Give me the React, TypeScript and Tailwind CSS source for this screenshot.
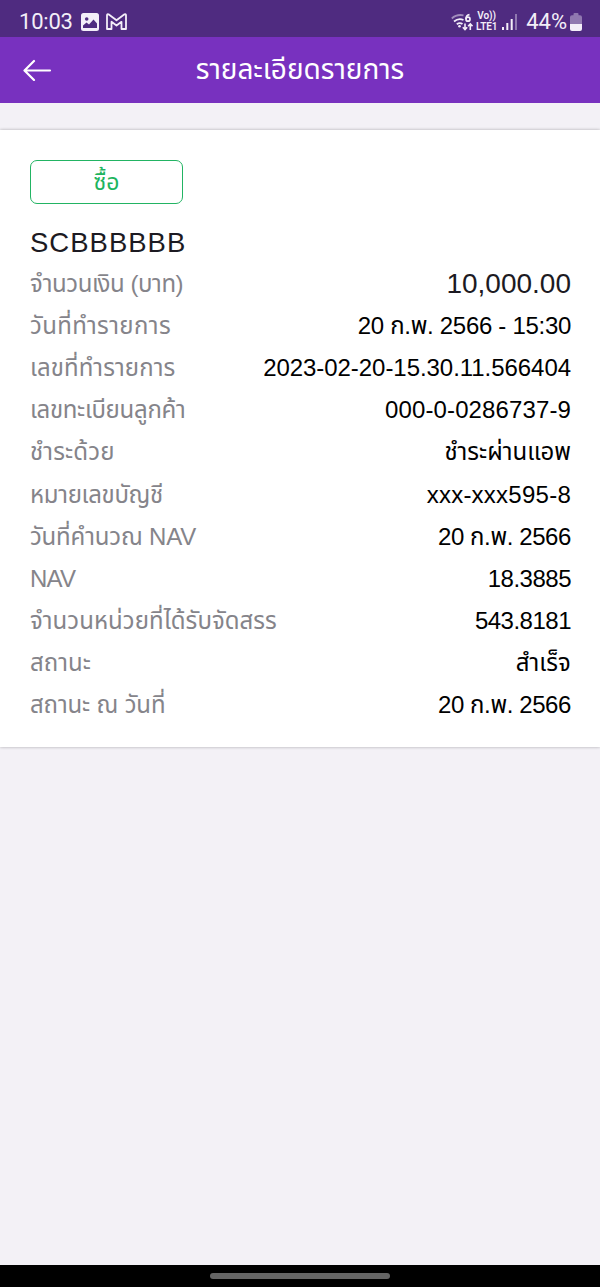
import clsx from 'clsx'

type Row = {
  label: string
  value: string
  labelClass?: string
  valueClass?: string
}

const ROWS: Row[] = [
  { label: 'จำนวนเงิน (บาท)', value: '10,000.00', labelClass: 'tracking-[-0.45px]', valueClass: 'text-[28px] text-[#1c1a22]' },
  { label: 'วันที่ทำรายการ', value: '20 ก.พ. 2566 - 15:30', labelClass: 'tracking-[0.4px]', valueClass: 'tracking-[-0.3px]' },
  { label: 'เลขที่ทำรายการ', value: '2023-02-20-15.30.11.566404', labelClass: 'tracking-[0.1px]', valueClass: 'tracking-[-0.05px]' },
  { label: 'เลขทะเบียนลูกค้า', value: '000-0-0286737-9', labelClass: 'tracking-[-0.3px]', valueClass: 'tracking-[0.12px]' },
  { label: 'ชำระด้วย', value: 'ชำระผ่านแอพ', labelClass: 'tracking-[0.2px]' },
  { label: 'หมายเลขบัญชี', value: 'xxx-xxx595-8', labelClass: 'tracking-[-0.3px]', valueClass: 'tracking-[0.25px]' },
  { label: 'วันที่คำนวณ NAV', value: '20 ก.พ. 2566', labelClass: 'tracking-[-0.2px]', valueClass: 'tracking-[-0.4px]' },
  { label: 'NAV', value: '18.3885', labelClass: 'tracking-[-0.8px]', valueClass: 'tracking-[-0.5px]' },
  { label: 'จำนวนหน่วยที่ได้รับจัดสรร', value: '543.8181', labelClass: 'tracking-[0.05px]', valueClass: 'tracking-[-0.5px]' },
  { label: 'สถานะ', value: 'สำเร็จ', valueClass: 'tracking-[0.1px]' },
  { label: 'สถานะ ณ วันที่', value: '20 ก.พ. 2566', labelClass: 'tracking-[-0.15px]', valueClass: 'tracking-[-0.4px]' },
]

function StatusBar() {
  return (
    <div className="flex h-[37px] items-center bg-[#4f2b80] pt-[7px] pl-[19px] pr-[18px] font-['Roboto',sans-serif] text-[22px] leading-none text-[#f3eef8]">
      <span className="tracking-[-0.2px]">10:03</span>
      <svg className="ml-[8px] h-[18px] w-[18px]" viewBox="0 0 18 18" fill="none">
        <rect width="18" height="18" rx="2.5" fill="#f3eef8" />
        <circle cx="5.7" cy="6" r="1.8" fill="#4f2b80" />
        <path d="M2 15v-2.5l3.500-3 2.500 2 4.500-5 3.500 4V15z" fill="#4f2b80" />
      </svg>
      <svg className="ml-[7px] h-[18px] w-[21px]" viewBox="0 0 21 18" fill="none" stroke="#f3eef8" strokeWidth="1.8" strokeLinejoin="round">
        <path d="M1 16V2.200Q1 1 2.500 1.300L10.500 7.300 18.500 1.300Q20 1 20 2.200V16H15.500V8.800L10.500 12.500 5.500 8.800V16z" />
      </svg>
      <div className="ml-auto flex items-center">
        <svg className="h-[18px] w-[22px]" viewBox="0 0 22 18" fill="none" stroke="#f3eef8" strokeWidth="1.8">
          <path d="M.8 5.500Q5.500 1 12.500 2.300" opacity=".5" />
          <path d="M3 8.500Q7.500 4.800 12.500 7M5.800 11.200Q8.700 9 11.500 11" />
          <circle cx="8.500" cy="13.200" r="1.300" fill="#f3eef8" stroke="none" />
          <path d="M18.500 1.700Q15.200 2.200 15 6" strokeWidth="1.700" />
          <circle cx="17" cy="6.200" r="2" strokeWidth="1.700" />
          <path d="M14 10.500v6M11.800 14.300l2.200 2.200 2.200-2.200M19.300 17v-6M17.100 13.200l2.200-2.200 2.200 2.200" strokeWidth="1.600" />
        </svg>
        <div className="ml-[2px] flex w-[23px] flex-col items-center whitespace-nowrap text-[10px] font-semibold leading-none">
          <span className="-mt-px mb-px">Vo))</span>
          <span className="tracking-[-0.1px]">LTE1</span>
        </div>
        <svg className="ml-[4px] h-[17px] w-[16px]" viewBox="0 0 16 17" fill="#f3eef8">
          <rect y="13" width="2" height="3" />
          <rect x="4.300" y="9" width="2" height="7" />
          <rect x="8.700" y="5" width="2" height="11" />
          <rect x="13" y="0" width="2" height="16" opacity=".4" />
        </svg>
        <span className="ml-[8px]">44%</span>
        <svg className="ml-[3px] h-[18px] w-[12px]" viewBox="0 0 12 18" fill="#f3eef8">
          <path d="M2 2.200h1.500V1q0-1 1-1h3q1 0 1 1v1.200H10q2 0 2 2V11H0V4.200q0-2 2-2z" opacity=".4" />
          <path d="M0 11h12v5q0 2-2 2H2q-2 0-2-2z" />
        </svg>
      </div>
    </div>
  )
}

function Header() {
  return (
    <header className="grid h-[66px] grid-cols-[1fr_auto_1fr] items-center bg-[#7831bf] px-[23px]">
      <svg className="h-[22px] w-[30px]" viewBox="0 0 30 22" fill="none" stroke="white" strokeWidth="2.200" strokeLinecap="round" strokeLinejoin="round">
        <path d="M27 11.500H2M11 2L1.500 11.500 11 21" />
      </svg>
      <h1 className="text-[28px] leading-none text-white">รายละเอียดรายการ</h1>
    </header>
  )
}

function DetailRow({ label, value, labelClass, valueClass }: Row) {
  return (
    <div className="flex h-[42.1px] items-center justify-between whitespace-nowrap text-[24px] leading-none text-black">
      <span className={clsx('text-[#85848a]', labelClass)}>{label}</span>
      <span className={clsx(valueClass)}>{value}</span>
    </div>
  )
}

export default function App() {
  return (
    <div className="flex h-[1287px] w-[600px] flex-col overflow-hidden bg-[#f3f1f6] font-['Liberation_Sans','Noto_Sans_Thai',sans-serif]">
      <StatusBar />
      <Header />
      <main className="flex-1 pt-[27px]">
        <section className="h-[617px] bg-white pt-[30px] pr-[29px] pl-[30px] shadow-[0_0_3px_rgba(0,0,0,0.3)]">
          <div className="flex h-[44px] w-[153px] items-center justify-center rounded-[7px] border-[1.5px] border-[#22b463] text-[23px] leading-none text-[#1db45e]">
            ซื้อ
          </div>
          <h2 className="mt-[21px] h-[38px] text-[27.5px] leading-[36px] tracking-[1px] text-[#1c1a22]">SCBBBBBB</h2>
          {ROWS.map((row) => (
            <DetailRow key={row.label} {...row} />
          ))}
        </section>
      </main>
      <footer className="flex h-[22px] items-center justify-center bg-black">
        <div className="h-[6px] w-[180px] rounded-full bg-[#656565]" />
      </footer>
    </div>
  )
}
